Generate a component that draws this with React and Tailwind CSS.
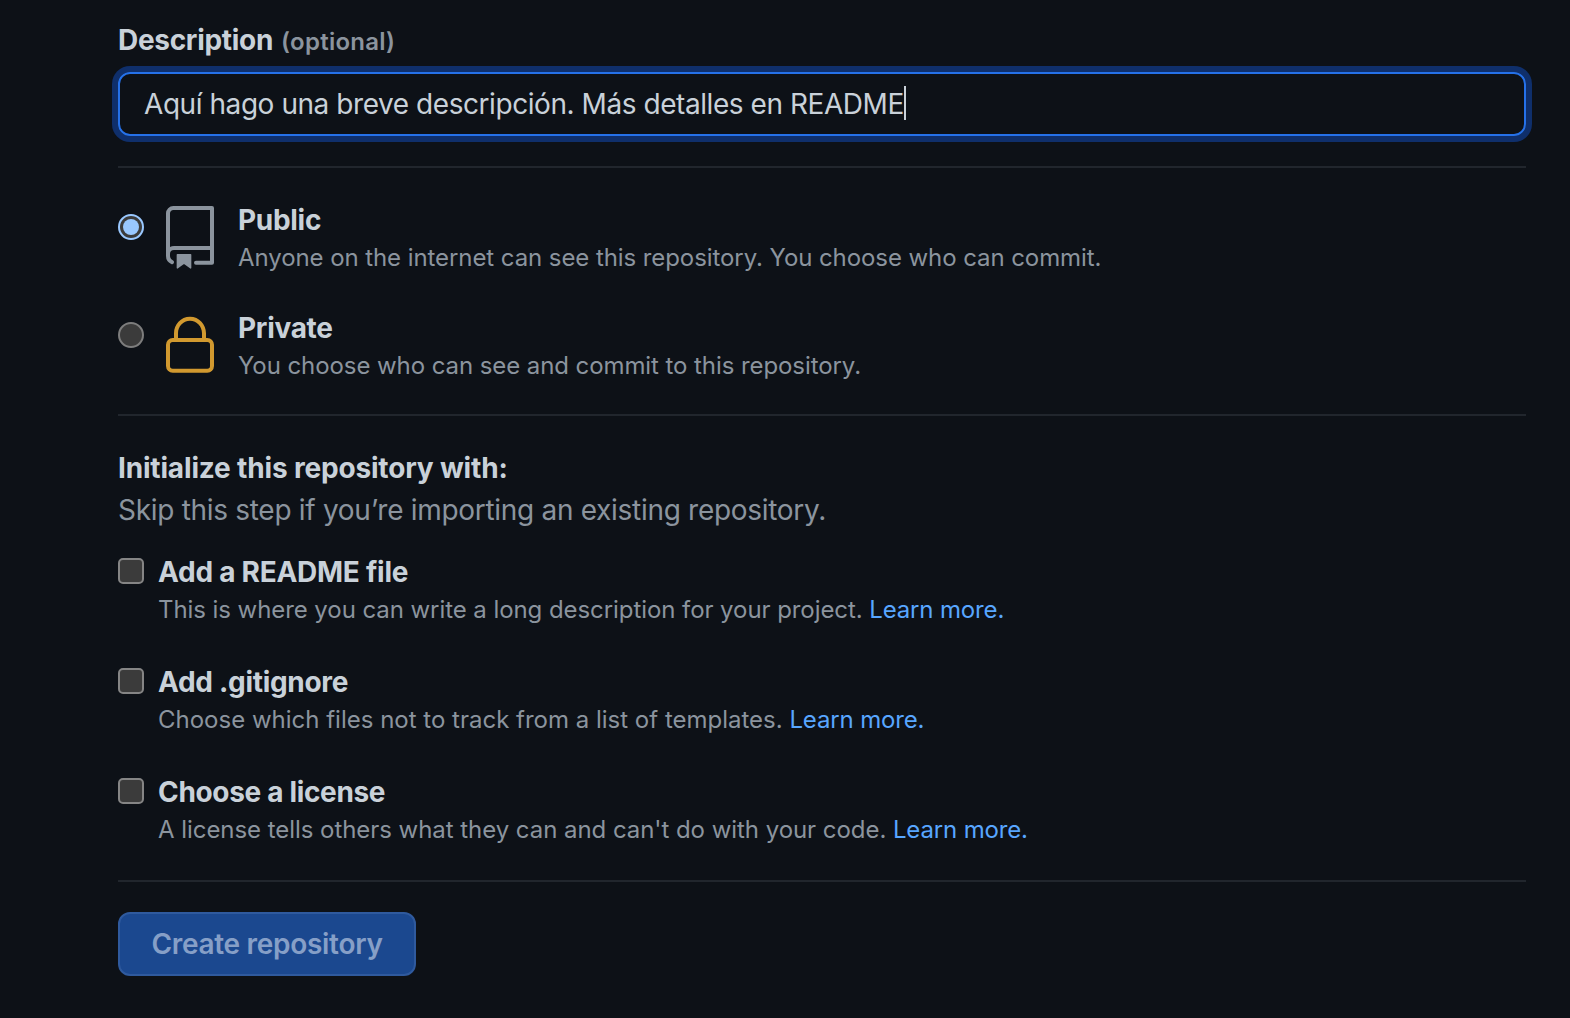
import React from 'react';

const TITLE = 'text-[28px] leading-[42px] font-[650] whitespace-nowrap';
const NOTE = 'text-[24px] leading-[36px] text-[#8b949e] whitespace-nowrap';

function Divider() {
  return <div className="h-[2px] shrink-0 bg-[#21262d]" />;
}

function RepoIcon() {
  return (
    <svg className="size-16 fill-[#8b949e]" viewBox="0 0 24 24">
      <path d="M7 18.25a.25.25 0 01.25-.25h5a.25.25 0 01.25.25v5.01a.25.25 0 01-.397.201l-2.206-1.604a.25.25 0 00-.294 0L7.397 23.46a.25.25 0 01-.397-.2v-5.01z" />
      <path fillRule="evenodd" d="M3 2.75A2.75 2.75 0 015.75 0h14.5a.75.75 0 01.75.75v20.5a.75.75 0 01-.75.75h-6a.75.75 0 010-1.5h5.25v-4H6A1.5 1.5 0 004.5 18v.75c0 .716.43 1.334 1.05 1.605a.75.75 0 01-.6 1.374A3.25 3.25 0 013 18.75v-16zM19.5 1.5V15H6c-.546 0-1.059.146-1.5.401V2.75c0-.69.56-1.25 1.25-1.25H19.5z" />
    </svg>
  );
}

function LockIcon() {
  return (
    <svg className="size-16 fill-[#d1992f]" viewBox="0 0 24 24">
      <path fillRule="evenodd" d="M6 9V7.25C6 3.845 8.503 1 12 1s6 2.845 6 6.25V9h.5a2.5 2.5 0 012.5 2.5v8a2.5 2.5 0 01-2.5 2.5h-13A2.5 2.5 0 013 19.5v-8A2.5 2.5 0 015.5 9H6zm1.5-1.75C7.5 4.58 9.422 2.5 12 2.5c2.578 0 4.5 2.08 4.5 4.75V9h-9V7.25zm-3 4.25a1 1 0 011-1h13a1 1 0 011 1v8a1 1 0 01-1 1h-13a1 1 0 01-1-1v-8z" />
    </svg>
  );
}

function Radio({ checked }) {
  return checked ? (
    <div className="mt-2 flex size-[26px] items-center justify-center rounded-full border-2 border-[#99c8ff] bg-[#3b3b3b]">
      <div className="size-4 rounded-full bg-[#99c8ff]" />
    </div>
  ) : (
    <div className="mt-2 size-[26px] rounded-full border-2 border-[#7d7d7d] bg-[#3b3b3b]" />
  );
}

const visibility = [
  { title: 'Public', note: 'Anyone on the internet can see this repository. You choose who can commit.', Icon: RepoIcon, checked: true },
  { title: 'Private', note: 'You choose who can see and commit to this repository.', Icon: LockIcon, checked: false },
];

const extras = [
  { title: 'Add a README file', note: 'This is where you can write a long description for your project.', titleClass: 'tracking-[-0.26px]', noteClass: 'tracking-[-0.07px]' },
  { title: 'Add .gitignore', note: 'Choose which files not to track from a list of templates.', titleClass: 'tracking-[-0.3px]', noteClass: 'tracking-[0px]' },
  { title: 'Choose a license', note: "A license tells others what they can and can't do with your code.", titleClass: 'tracking-[-0.33px]', noteClass: 'tracking-[-0.05px]' },
];

export default function App() {
  return (
    <form className="flex h-[1018px] w-full flex-col overflow-hidden bg-[#0d1117] pt-[19px] pr-11 pl-[118px] font-['Inter',sans-serif] text-[#c9d1d9]">
      <label className="flex h-[42px] shrink-0 items-baseline gap-2">
        <span className={`${TITLE} tracking-[-0.3px]`}>Description</span>
        <span className="text-[24px] font-semibold tracking-[0.25px] text-[#8b949e]">(optional)</span>
      </label>
      <div className="mt-[11px] mb-[30px] flex h-16 shrink-0 items-center rounded-[12px] border-2 border-[#2571e9] px-6 text-[28px] whitespace-nowrap shadow-[0_0_0_6px_#0f2f6b]">
        <span className="tracking-[-0.44px]">Aquí hago una breve descripción. Más detalles en README</span>
        <span className="-mt-[2px] h-[34px] w-[2px] bg-[#c9d1d9]" />
      </div>
      <Divider />

      <section className="flex flex-col pt-[38px] pb-[24px]">
        {visibility.map(({ title, note, Icon, checked }, i) => (
          <div key={title} className={`flex items-start ${i === 0 ? 'h-[108px]' : 'h-[76px]'}`}>
            <Radio checked={checked} />
            <div className="ml-[14px]"><Icon /></div>
            <div className="-mt-[7px] ml-4">
              <h2 className={`${TITLE} tracking-[-0.3px]`}>{title}</h2>
              <p className={`${NOTE} -mt-px tracking-[-0.08px]`}>{note}</p>
            </div>
          </div>
        ))}
      </section>
      <Divider />

      <section className="flex flex-col pt-[31px]">
        <h2 className={`${TITLE} tracking-[-0.17px]`}>Initialize this repository with:</h2>
        <p className="text-[28px] leading-[42px] tracking-[-0.3px] whitespace-nowrap text-[#8b949e]">Skip this step if you’re importing an existing repository.</p>
        <div className="mt-5 -mb-px">
          {extras.map(({ title, note, titleClass, noteClass }) => (
            <div key={title} className="flex h-[110px] items-start">
              <div className="mt-[7px] size-[26px] rounded-[5px] border-2 border-[#858585] bg-[#3b3b3b]" />
              <div className="ml-[14px]">
                <h3 className={`${TITLE} ${titleClass}`}>{title}</h3>
                <p className={`${NOTE} ${noteClass} -mt-px`}>
                  {note} <a className="tracking-[-0.15px] text-[#58a6ff]">Learn more.</a>
                </p>
              </div>
            </div>
          ))}
        </div>
      </section>
      <Divider />

      <button type="button" className="mt-[30px] h-16 w-[298px] shrink-0 rounded-[12px] border-2 border-[#2f5a9e] bg-[#1b488f] text-[28px] font-semibold tracking-[-0.3px] whitespace-nowrap text-[#869fc7]">
        Create repository
      </button>
    </form>
  );
}
